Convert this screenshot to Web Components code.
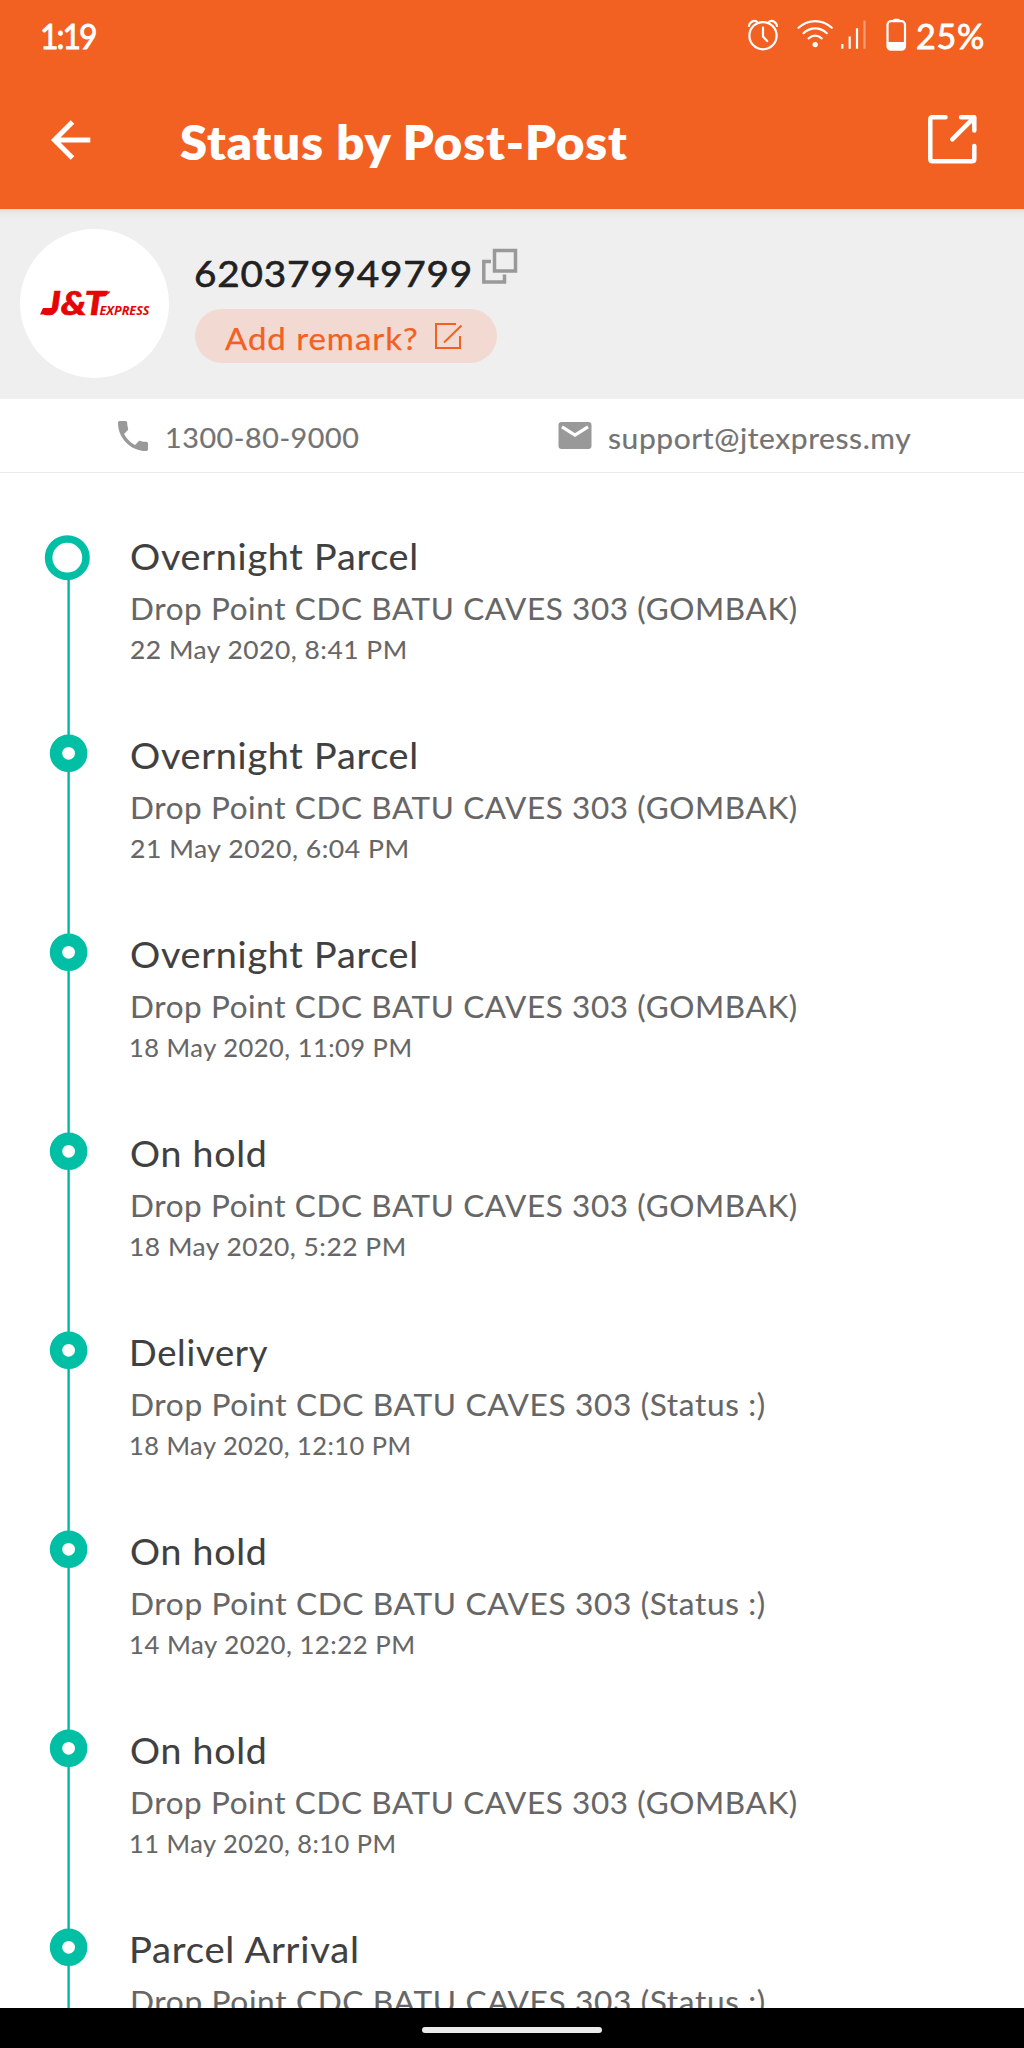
<!DOCTYPE html>
<html lang="en">
<head>
<meta charset="utf-8">
<title>Status by Post-Post</title>
<style>
body{margin:0;background:#fff;font-family:Lato,"Open Sans",sans-serif}
</style>
</head>
<body>
<tracking-app></tracking-app>
<script>
const define = (name, cls) => customElements.define(name, cls);
const ctx = document.createElement('canvas').getContext('2d');

// One line of text whose ink spans exactly the "ink" width: the glyphs are
// widened slightly first, and tracking takes up whatever remains.
define('fit-text', class extends HTMLElement {
  connectedCallback() {
    const a = k => this.getAttribute(k);
    const text = a('text'), size = +a('size'), ink = +a('ink'), weight = a('weight') || 400;
    const stroke = a('stroke') || 0.1;
    ctx.font = `${weight} ${size}px Lato, "Open Sans", sans-serif`;
    const m = ctx.measureText(text), n = text.length - 1;
    const natural = m.actualBoundingBoxRight + m.actualBoundingBoxLeft;
    const scale = Math.min(1.08, Math.max(0.94, ink / (natural + n * size * 0.02)));
    const ls = (ink / scale - natural) / n;
    const root = this.attachShadow({mode: 'open'});
    root.innerHTML = `<style>
      :host{display:block;flex:none;width:${ink}px;height:${a('line')}px;white-space:nowrap}
      span{display:block;width:max-content;font-size:${size}px;font-weight:${weight};line-height:${a('line')}px;letter-spacing:${ls}px;margin-left:${m.actualBoundingBoxLeft * scale}px;transform:scaleX(${scale});transform-origin:0 0;-webkit-text-stroke:${stroke}px currentColor}
    </style><span></span>`;
    root.querySelector('span').textContent = text;
  }
});

define('status-bar', class extends HTMLElement {
  constructor() {
    super();
    this.attachShadow({mode: 'open'}).innerHTML = `<style>
      :host{display:flex;height:70px;color:#fff;padding:0 41px 0 42px;align-items:flex-start;justify-content:space-between;box-sizing:border-box}
      .right{display:flex}
      fit-text{margin-top:16px}
    </style>
    <fit-text text="1:19" size="34" ink="54" line="40" stroke=".8"></fit-text>
    <div class="right">
      <svg width="174" height="70" viewBox="743 0 174 70" fill="none" stroke="#fff" stroke-width="2.200">
        <circle cx="763" cy="35.700" r="13.600"/>
        <path d="M763 27.500v9l4.200 4.500M749 26c.3-3.500 4.500-6.500 7.800-4.300M777 26c-.3-3.500-4.500-6.500-7.800-4.300" stroke-linecap="round"/>
        <path d="M798.500 27.800c9.800-9 23.500-9 33.300 0M803.500 33.200c7-6.400 16.300-6.400 23.300 0M808.600 38.300c4.200-3.500 8.900-3.500 13.100 0" stroke-linecap="round"/>
        <circle cx="815.200" cy="44.600" r="2.700" fill="#fff" stroke="none"/>
        <path d="M842.300 44v4.700M849.700 36.500v12.200M857 28.300v20.400"/>
        <path d="M864.500 20.500v28.200" opacity=".38"/>
        <rect x="887.500" y="21.200" width="17.500" height="28.500" rx="3.500"/>
        <path d="M892.500 20.800q.4-2 2-2h3.800q1.600 0 2 2z" fill="#fff" stroke="none"/>
        <path d="M888 42h17v5q0 3-3 3h-11q-3 0-3-3z" fill="#fff" stroke="none"/>
      </svg>
      <fit-text text="25%" size="34" ink="66" line="40" stroke=".8"></fit-text>
    </div>`;
  }
});

define('app-bar', class extends HTMLElement {
  constructor() {
    super();
    this.attachShadow({mode: 'open'}).innerHTML = `<style>
      :host{display:flex;height:139px;color:#fff;padding:0 47px 0 50px;box-sizing:border-box;align-items:flex-start}
      .back{width:41px;height:42px;margin:49px 89px 0 0}
      .open{width:49px;height:50px;margin:44px 0 0 auto}
      fit-text{margin-top:42px}
    </style>
    <svg class="back" viewBox="50 119 41 42" fill="none" stroke="#fff" stroke-width="5"><path d="M90.300 140H54M72.500 122 54.500 140l18 18"/></svg>
    <fit-text text="Status by Post-Post" size="47" ink="448" line="60" weight="800"></fit-text>
    <svg class="open" viewBox="928 114 49 50" fill="none" stroke="#fff" stroke-width="4.500" stroke-linecap="round" stroke-linejoin="round"><path d="M945.500 117.300H932.500Q930.300 117.300 930.300 119.500V159Q930.300 161.300 932.500 161.300H972Q974.300 161.300 974.300 159V146M961 117.300H974.300V130.500M973 118.600 952.300 139.300"/></svg>`;
  }
});

define('courier-logo', class extends HTMLElement {
  constructor() {
    super();
    this.attachShadow({mode: 'open'}).innerHTML = `<style>
      :host{display:block;width:149px;height:149px;border-radius:50%;background:#fff}
      svg{display:block}
    </style>
    <svg width="149" height="149" viewBox="20 229.500 149 149" fill="#e60505">
      <g font-family="Lato, sans-serif" font-style="italic">
        <text x="45" y="315" font-size="32" font-weight="900" textLength="61" lengthAdjust="spacingAndGlyphs" stroke="#e60505" stroke-width=".6">J&amp;T</text>
        <text x="99.500" y="315" font-family="Open Sans, sans-serif" font-size="12.800" font-weight="700" textLength="50" lengthAdjust="spacingAndGlyphs">EXPRESS</text>
      </g>
      <path d="M43 308.500H55l-2 6.500H40zM98 292h12.500l-2 2.200-8 .4 7 .2-2 2-6 .4z"/>
    </svg>`;
  }
});

define('remark-button', class extends HTMLElement {
  constructor() {
    super();
    this.attachShadow({mode: 'open'}).innerHTML = `<style>
      :host{display:flex;box-sizing:border-box;width:302px;height:54px;border-radius:27px;background:#f2dad3;color:#f26122;padding-left:30px}
      fit-text{margin-top:9px}
      svg{margin:13px 0 0 16px}
    </style>
    <fit-text text="Add remark?" size="30.500" ink="192" line="40" stroke=".25"></fit-text>
    <svg width="30" height="30" viewBox="433 322 30 30" fill="none" stroke="#f26122" stroke-width="2"><path d="M456 324H436V348H460V336M444 342.500 461.500 325.500"/></svg>`;
  }
});

define('parcel-header', class extends HTMLElement {
  constructor() {
    super();
    this.attachShadow({mode: 'open'}).innerHTML = `<style>
      :host{display:flex;height:190px;background:linear-gradient(#dedede,#e9e9e9 4px,#efefef 11px);padding-left:20px;box-sizing:border-box}
      courier-logo{margin:20px 25.500px 0 0}
      .top{display:flex;height:100px;color:#212121}
      .top fit-text{margin:39px 11.500px 0 1.500px}
      .top svg{margin-top:39px}
    </style>
    <courier-logo></courier-logo>
    <div>
      <div class="top">
        <fit-text text="620379949799" size="37" ink="274.500" line="50" stroke=".6"></fit-text>
        <svg width="36" height="36" viewBox="482 248 36 36" fill="none" stroke="#999" stroke-width="3.500"><path d="M494.500 250.500H515.500V271H494.500zM491 261.500H483.800V282H504.500V274.500"/></svg>
      </div>
      <remark-button></remark-button>
    </div>`;
  }
});

define('contact-bar', class extends HTMLElement {
  constructor() {
    super();
    this.attachShadow({mode: 'open'}).innerHTML = `<style>
      :host{display:flex;height:74px;border-bottom:1px solid #e9e9e9;color:#737373;box-sizing:border-box;padding-left:118px}
      fit-text{margin-top:19px}
      svg{flex:none}
      .tel{margin:22px 19px 0 0}.mail{margin:23px 16px 0 200px}
    </style>
    <svg class="tel" width="30" height="30" viewBox="3 3 18 18" fill="#999"><path d="M6.620 10.790c1.440 2.830 3.760 5.140 6.590 6.590l2.200-2.200c.27-.27.67-.36 1.020-.24 1.120.37 2.330.57 3.570.57.55 0 1 .45 1 1V20c0 .55-.45 1-1 1C10.610 21 3 13.390 3 4c0-.55.45-1 1-1h3.500c.55 0 1 .45 1 1 0 1.250.2 2.450.57 3.570.11.35.03.74-.25 1.020z"/></svg>
    <fit-text text="1300-80-9000" size="27" ink="191" line="40" stroke=".2"></fit-text>
    <svg class="mail" width="34" height="27" viewBox="0 0 34 27"><rect x=".5" width="33" height="27" rx="3.300" fill="#999"/><path d="M4 4.800 17 13 30 4.800" fill="none" stroke="#fff" stroke-width="3.200"/></svg>
    <fit-text text="support@jtexpress.my" size="28.500" ink="303" line="40" stroke=".2"></fit-text>`;
  }
});

define('tracking-event', class extends HTMLElement {
  connectedCallback() {
    const d = this.dataset, first = 'first' in d;
    const stem = /^[DP]/.test(d.title) ? 1.5 : 0;
    const root = this.attachShadow({mode: 'open'});
    root.innerHTML = `<style>
      :host{display:flex;height:199px}
      svg{flex:none;width:131px;height:199px}
      .t{margin:10px 0 0 ${stem}px;color:#404040}.d{margin:10px 0 0 1px;color:#666}.w{margin-top:5px;color:#666}
    </style>
    <svg viewBox="0 0 131 199">
      <path d="M68.600 ${first ? 50 : 0}V199" stroke="#00b89c" stroke-width="2.400"/>
      ${first ? '<circle cx="67.300" cy="33.700" r="18.700" fill="#fff" stroke="#00bfa5" stroke-width="7.600"/>'
              : '<circle cx="68.600" cy="30.300" r="12.600" fill="#fff" stroke="#00bfa5" stroke-width="12.400"/>'}
    </svg>
    <div>
      <fit-text class="t" text="${d.title}" size="36" ink="${d.tw}" line="44"></fit-text>
      <fit-text class="d" text="${d.place}" size="30.500" ink="${d.place.includes('GOMBAK') ? 664 : 632}" line="40"></fit-text>
      ${d.when ? `<fit-text class="w" text="${d.when}" size="25.500" ink="${d.ww}" line="32"></fit-text>` : ''}
    </div>`;
  }
});

define('event-timeline', class extends HTMLElement {
  constructor() {
    super();
    const G = 'Drop Point CDC BATU CAVES 303 (GOMBAK)', S = 'Drop Point CDC BATU CAVES 303 (Status :)';
    const rows = [
      ['Overnight Parcel', 284.5, G, '22 May 2020, 8:41 PM', 275],
      ['Overnight Parcel', 284.5, G, '21 May 2020, 6:04 PM', 277],
      ['Overnight Parcel', 284.5, G, '18 May 2020, 11:09 PM', 280],
      ['On hold', 133.5, G, '18 May 2020, 5:22 PM', 274],
      ['Delivery', 136, S, '18 May 2020, 12:10 PM', 279],
      ['On hold', 133.5, S, '14 May 2020, 12:22 PM', 283],
      ['On hold', 133.5, G, '11 May 2020, 8:10 PM', 264],
      ['Parcel Arrival', 225.5, S, '', 0]
    ];
    this.attachShadow({mode: 'open'}).innerHTML = `<style>
      :host{display:block;flex:1;min-height:0;overflow:hidden;padding-top:51px;box-sizing:border-box}
    </style>` + rows.map(([t, tw, p, w, ww], i) =>
      `<tracking-event ${i ? '' : 'data-first'} data-title="${t}" data-tw="${tw}" data-place="${p}" data-when="${w}" data-ww="${ww}"></tracking-event>`).join('');
  }
});

define('nav-bar', class extends HTMLElement {
  constructor() {
    super();
    this.attachShadow({mode: 'open'}).innerHTML = `<style>
      :host{display:flex;flex:none;height:40px;background:#000;justify-content:center;padding-top:19px;box-sizing:border-box}
      i{width:180px;height:6px;border-radius:3px;background:#ebebeb}
    </style><i></i>`;
  }
});

define('tracking-app', class extends HTMLElement {
  constructor() {
    super();
    this.attachShadow({mode: 'open'}).innerHTML = `<style>
      :host{display:flex;flex-direction:column;width:1024px;height:2048px;overflow:hidden;background:#fff}
      header{background:#f26122}
      header,parcel-header,contact-bar{flex:none}
    </style>
    <header><status-bar></status-bar><app-bar></app-bar></header>
    <parcel-header></parcel-header>
    <contact-bar></contact-bar>
    <event-timeline></event-timeline>
    <nav-bar></nav-bar>`;
  }
});
</script>
</body>
</html>
